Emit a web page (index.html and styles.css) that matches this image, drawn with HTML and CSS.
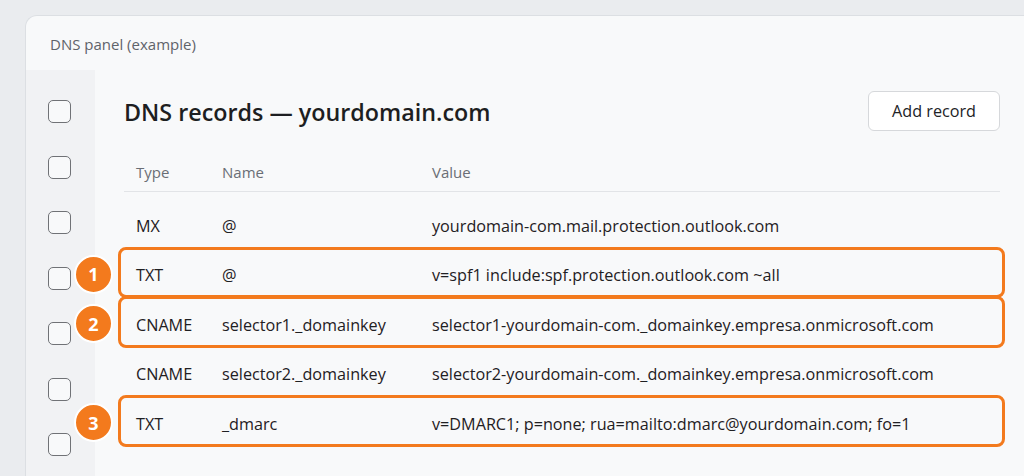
FILE: index.html
```html
<!DOCTYPE html>
<html>
<head>
<meta charset="utf-8">
<link rel="stylesheet" href="styles.css">
</head>
<body>
<div class="page">
  <div class="card">
    <div class="card-head">DNS panel (example)</div>
    <div class="card-body">
      <div class="sidebar">
        <span class="cb"></span>
        <span class="cb"></span>
        <span class="cb"></span>
        <span class="cb"></span>
        <span class="cb"></span>
        <span class="cb"></span>
        <span class="cb"></span>
      </div>
      <div class="main">
        <div class="title-row">
          <h1 class="title">DNS records — yourdomain.com</h1>
          <button class="btn">Add record</button>
        </div>
        <div class="table">
          <div class="thead">
            <span>Type</span><span>Name</span><span>Value</span>
          </div>
          <div class="tbody">
            <div class="row">
              <span>MX</span><span>@</span><span>yourdomain-com.mail.protection.outlook.com</span>
            </div>
            <div class="row">
              <span>TXT</span><span>@</span><span>v=spf1 include:spf.protection.outlook.com ~all</span>
              <span class="hl"></span><span class="badge">1</span>
            </div>
            <div class="row">
              <span>CNAME</span><span>selector1._domainkey</span><span>selector1-yourdomain-com._domainkey.empresa.onmicrosoft.com</span>
              <span class="hl"></span><span class="badge">2</span>
            </div>
            <div class="row">
              <span>CNAME</span><span>selector2._domainkey</span><span>selector2-yourdomain-com._domainkey.empresa.onmicrosoft.com</span>
            </div>
            <div class="row">
              <span>TXT</span><span>_dmarc</span><span>v=DMARC1; p=none; rua=mailto:dmarc@yourdomain.com; fo=1</span>
              <span class="hl"></span><span class="badge">3</span>
            </div>
          </div>
        </div>
      </div>
    </div>
  </div>
</div>
</body>
</html>
```

FILE: styles.css
```css
* { box-sizing: border-box; }
html, body { margin: 0; padding: 0; }
body {
  background: #eaecef;
  font-family: "Open Sans", "Noto Sans", sans-serif;
  color: #1f2023;
  width: 1024px;
  height: 476px;
  overflow: hidden;
}
.page {
  padding: 15px 0 0 25px;
  height: 476px;
}
.card {
  background: #f8f9fa;
  border: 1px solid #dcdfe3;
  border-right: none;
  border-bottom: none;
  border-radius: 12px 0 0 0;
  height: 461px;
  display: flex;
  flex-direction: column;
}
.card-head {
  height: 54px;
  padding: 18px 0 0 24px;
  font-size: 15px;
  color: #5f636a;
  line-height: 20px;
}
.card-body {
  flex: 1;
  display: flex;
}
.sidebar {
  width: 69px;
  background: #f1f2f4;
  padding: 30px 0 0 22px;
  display: flex;
  flex-direction: column;
  gap: 32.5px;
}
.cb {
  display: block;
  width: 23px;
  height: 23px;
  border: 1.6px solid #707276;
  border-radius: 5px;
  background: #f8f9fa;
}
.main {
  flex: 1;
  padding: 21px 24px 0 29px;
}
.title-row {
  display: flex;
  justify-content: space-between;
  align-items: center;
  height: 40px;
}
.title {
  margin: 0;
  font-size: 23.3px;
  font-weight: 600;
  color: #1d1e21;
  padding-top: 2px;
}
.btn {
  width: 132px;
  height: 40px;
  background: #ffffff;
  border: 1px solid #d6d8db;
  border-radius: 6px;
  font-family: inherit;
  font-size: 16.2px;
  color: #222326;
  padding: 0;
}
.table { margin-top: 21px; }
.thead, .row {
  display: grid;
  grid-template-columns: 86px 210px 1fr;
  padding-left: 12px;
  align-items: center;
}
.thead {
  height: 40px;
  border-bottom: 1px solid #e2e4e7;
  font-size: 15px;
  color: #6a6e75;
}
.tbody { padding-top: 9px; }
.row {
  position: relative;
  height: 49.5px;
  font-size: 16.2px;
  white-space: nowrap;
}
.hl {
  position: absolute;
  left: -6px;
  right: -5px;
  top: -4px;
  bottom: 2px;
  border: 3px solid #f37a1d;
  border-radius: 8px;
  pointer-events: none;
}
.badge {
  position: absolute;
  left: -50px;
  top: 4px;
  width: 39px;
  height: 39px;
  border-radius: 50%;
  background: #f37a1d;
  border: 2px solid #ffffff;
  color: #ffffff;
  font-weight: 700;
  font-size: 18px;
  display: flex;
  align-items: center;
  justify-content: center;
  line-height: 1;
}
```
